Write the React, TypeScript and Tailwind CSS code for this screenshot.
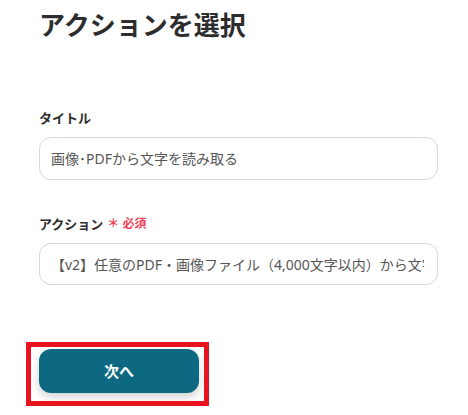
const font = { fontFamily: '"Noto Sans", "Noto Sans CJK JP", sans-serif' }

export default function App() {
  return (
    <div className="w-[468px] h-[415px] bg-white overflow-hidden" style={font}>
      <div className="pl-[39px] flex flex-col items-start">
        <h1 className="mt-[7px] text-[26px] leading-[36px] font-bold text-[#2d2d2d]">
          アクションを選択
        </h1>

        <label className="mt-[65px] text-[13px] leading-[20px] font-bold text-[#2d2d2d]">
          タイトル
        </label>
        <div className="mt-[9px] w-[399px] h-[43px] border border-[#d3d7de] rounded-[12px] px-[11px] flex items-center">
          <span className="text-[14px] text-[#555] whitespace-nowrap">
            画像･PDFから文字を読み取る
          </span>
        </div>

        <label className="mt-[34px] text-[13px] leading-[20px] font-bold text-[#2d2d2d] flex items-center gap-1">
          アクション
          <span className="text-[12px] text-[#f0455a] font-bold">＊ 必須</span>
        </label>
        <div className="mt-[9px] w-[399px] h-[42px] border border-[#d3d7de] rounded-[12px] pl-[11px] pr-[13px] flex items-center overflow-hidden">
          <span className="text-[14px] text-[#555] whitespace-nowrap overflow-hidden">
            【v2】任意のPDF・画像ファイル（4,000文字以内）から文字を読み取る
          </span>
        </div>

        <div className="relative mt-[64px]">
          <button className="w-[160px] h-[44px] rounded-[12px] bg-[#0d6982] text-white text-[15px] font-bold shadow-[0_4px_10px_rgba(0,0,0,0.18)]">
            次へ
          </button>
          <div className="absolute left-[-13px] top-[-7px] w-[183px] h-[64px] border-[5px] border-[#e8131f] pointer-events-none" />
        </div>
      </div>
    </div>
  )
}
